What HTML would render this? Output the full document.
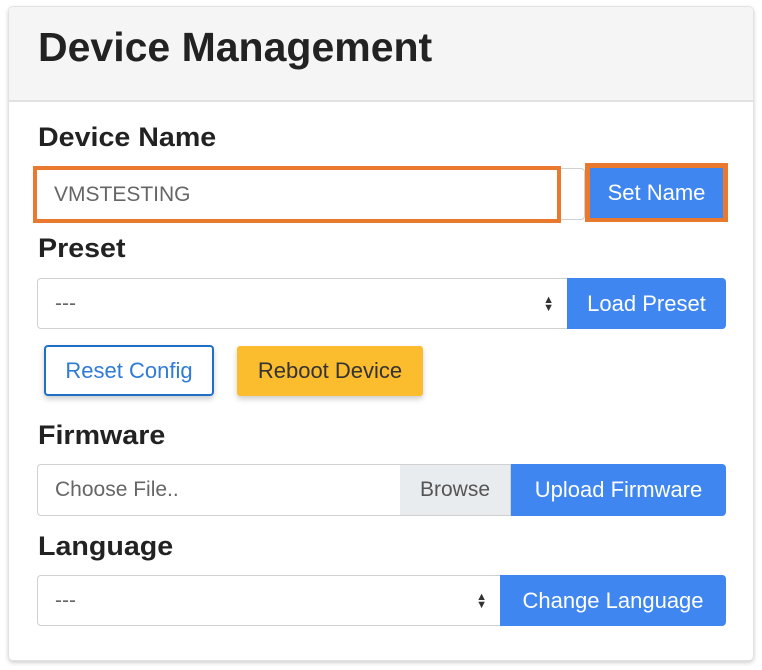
<!DOCTYPE html>
<html><head><style>
body{margin:0;width:762px;height:670px;background:#fff;font-family:"Liberation Sans",sans-serif;position:relative;overflow:hidden}
.a{position:absolute;box-sizing:border-box}
.card{left:8px;top:6px;width:746px;height:655px;border:1px solid #e2e2e2;border-radius:5px;box-shadow:0 2px 4px rgba(0,0,0,.18);background:#fff}
.hdr{left:9px;top:7px;width:744px;height:95px;background:#f5f5f5;border-bottom:2px solid #e2e2e2;border-radius:5px 5px 0 0}
.t{font-weight:bold;color:#222;white-space:nowrap;transform-origin:left top}
.l{font-size:27px;transform:scaleX(1.06)}
.btn{background:#3f86f0;color:#fff;font-size:22px;display:flex;align-items:center;justify-content:center;white-space:nowrap}
.in{border:1px solid #d0d0d0;background:#fff;color:#666;font-size:21px;display:flex;align-items:center;padding-left:17px}
.arr{position:absolute;right:14px;top:50%;transform:translateY(-50%);font-size:11px;line-height:8px;color:#333}
</style></head><body>
<div class="a card"></div>
<div class="a hdr"></div>
<div class="a t" style="left:38px;top:24px;font-size:41px;transform:scaleX(1.0)">Device Management</div>
<div class="a t l" style="left:38px;top:122px">Device Name</div>
<div class="a in" style="left:37px;top:168px;width:548px;height:52px;border-radius:0 4px 4px 0"></div>
<div class="a" style="left:33px;top:166px;width:528px;height:57px;border:4px solid #e8792e;background:#fff;color:#666;font-size:21px;padding-left:17px;display:flex;align-items:center">VMSTESTING</div>
<div class="a" style="left:585px;top:163px;width:143px;height:59px;background:#e8792e"></div>
<div class="a btn" style="left:590px;top:168px;width:133px;height:50px">Set Name</div>
<div class="a t l" style="left:38px;top:233px">Preset</div>
<div class="a in" style="left:37px;top:278px;width:532px;height:51px;border-radius:4px 0 0 4px">---<span class="arr">▲<br>▼</span></div>
<div class="a btn" style="left:567px;top:278px;width:159px;height:51px;border-radius:0 4px 4px 0">Load Preset</div>
<div class="a" style="left:44px;top:345px;width:170px;height:51px;border:2px solid #1f6fc7;border-radius:4px;color:#2f7bd8;font-size:22px;display:flex;align-items:center;justify-content:center;box-shadow:0 3px 6px rgba(0,0,0,.2)">Reset Config</div>
<div class="a" style="left:237px;top:346px;width:186px;height:50px;background:#fbbc2e;border-radius:3px;color:#333;font-size:22px;display:flex;align-items:center;justify-content:center;box-shadow:0 3px 6px rgba(0,0,0,.2)">Reboot Device</div>
<div class="a t l" style="left:38px;top:420px">Firmware</div>
<div class="a in" style="left:37px;top:464px;width:380px;height:52px;border-radius:4px 0 0 4px">Choose File..</div>
<div class="a" style="left:400px;top:464px;width:111px;height:52px;background:#e9ecef;border:1px solid #d0d0d0;border-left:none;color:#555;font-size:21px;display:flex;align-items:center;justify-content:center">Browse</div>
<div class="a btn" style="left:511px;top:464px;width:215px;height:52px;border-radius:0 4px 4px 0">Upload Firmware</div>
<div class="a t l" style="left:38px;top:531px">Language</div>
<div class="a in" style="left:37px;top:575px;width:465px;height:51px;border-radius:4px 0 0 4px">---<span class="arr">▲<br>▼</span></div>
<div class="a btn" style="left:500px;top:575px;width:226px;height:51px;border-radius:0 4px 4px 0">Change Language</div>
</body></html>
